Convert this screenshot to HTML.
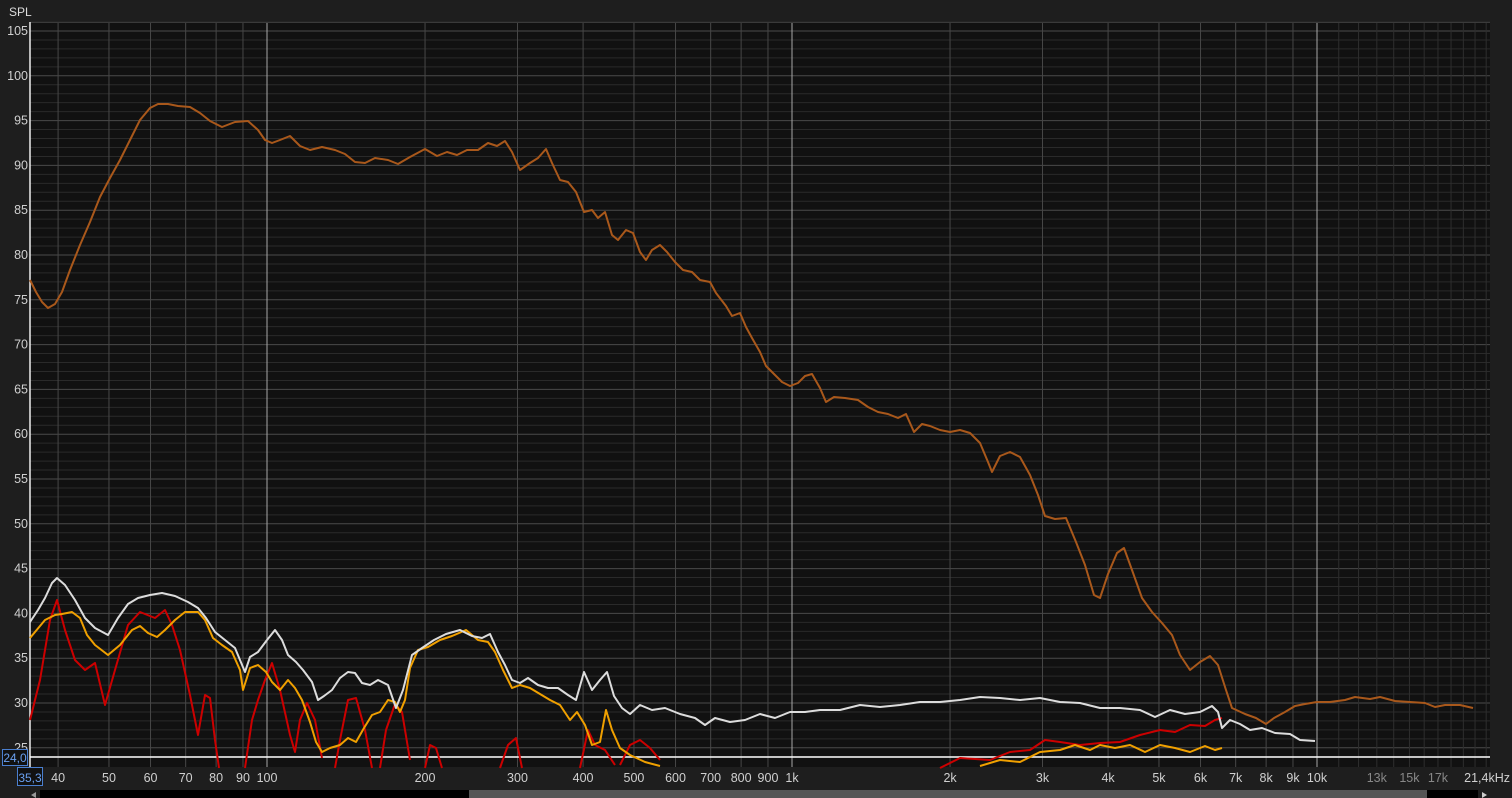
<!DOCTYPE html>
<html><head><meta charset="utf-8"><style>
html,body{margin:0;padding:0;background:#1e1e1e;width:1512px;height:798px;overflow:hidden;font-family:"Liberation Sans",sans-serif}
svg{position:absolute;left:0;top:0}
</style></head><body>
<svg id="s" width="1512" height="798" xmlns="http://www.w3.org/2000/svg">
<rect x="0" y="0" width="1512" height="798" fill="#1e1e1e"/>
<text x="9" y="16" fill="#ddd" font-size="12">SPL</text>
<rect x="30" y="22" width="1460" height="745" fill="#111"/>
<g id="grid"></g>
<line x1="30" y1="22.5" x2="1490" y2="22.5" stroke="#3a3a3a" stroke-width="1"/>
<line x1="30" y1="22" x2="30" y2="767" stroke="#eee" stroke-width="1.5"/>
<line x1="30" y1="757" x2="1490" y2="757" stroke="#fff" stroke-width="1.5"/>
<g fill="none" stroke-width="2" stroke-linejoin="round">
<polyline stroke="#cc0000" points="30,720 40,680 50,620 57,600 65,630 75,660 85,670 95,663 105,705 115,670 128,625 140,612 155,618 165,610 172,625 180,650 190,695 198,735 205,695 210,698 215,740 219,768"/>
<polyline stroke="#cc0000" points="245,768 252,720 258,700 265,680 272,663 280,690 290,735 295,752 300,720 307,703 315,720 322,758"/>
<polyline stroke="#cc0000" points="335,768 340,740 348,700 356,698 365,730 372,768"/>
<polyline stroke="#cc0000" points="380,768 386,730 395,704 402,712 410,760"/>
<polyline stroke="#cc0000" points="425,768 430,745 436,748 442,768"/>
<polyline stroke="#cc0000" points="500,768 508,745 516,738 522,768"/>
<polyline stroke="#cc0000" points="580,768 588,730 595,745 605,750 615,765"/>
<polyline stroke="#cc0000" points="620,765 630,745 640,740 650,748 660,760"/>
<polyline stroke="#cc0000" points="940,768 960,758 990,760 1010,752 1030,750 1045,740 1060,742 1080,745 1100,743 1120,742 1140,735 1160,730 1175,732 1190,725 1205,726 1215,720 1222,718"/>
<polyline stroke="#f0a000" points="30,638 45,620 55,615 62,614 72,612 80,618 87,635 95,645 108,655 120,645 132,630 140,626 148,633 157,637 165,630 175,620 185,612 198,612 205,620 213,638 222,645 232,652 240,670 243,690 250,668 258,665 266,672 272,682 280,690 288,680 295,688 302,700 310,722 316,742 322,752 330,748 340,745 348,738 356,742 364,728 372,715 380,712 388,700 395,702 400,712 405,700 410,668 418,650 428,647 440,640 452,636 466,630 478,640 488,642 495,652 503,670 512,688 520,685 530,688 540,694 550,700 560,705 570,720 577,712 585,725 592,745 600,742 606,710 612,730 620,748 630,755 645,762 660,766"/>
<polyline stroke="#f0a000" points="980,766 1000,760 1020,762 1040,752 1060,750 1075,745 1090,750 1100,745 1115,748 1130,745 1145,752 1160,745 1175,748 1190,752 1205,746 1215,750 1222,748"/>
<polyline stroke="#dcdcdc" points="30,622 38,610 45,598 52,583 57,578 65,585 75,600 85,618 95,628 108,635 118,618 128,604 138,598 150,595 162,593 175,596 188,602 198,608 206,618 215,632 225,640 235,648 240,660 245,672 250,657 258,652 267,640 275,630 282,640 288,655 296,662 303,670 312,682 318,700 324,696 332,690 340,678 348,672 355,673 362,683 370,685 378,680 388,685 396,708 403,690 412,655 422,648 434,640 446,634 460,630 472,636 482,638 490,634 498,652 505,665 512,680 520,683 528,678 538,685 548,688 558,688 568,695 576,700 584,672 592,690 600,680 607,672 614,696 622,708 630,714 640,705 652,710 665,708 680,714 695,718 705,725 715,718 730,722 745,720 760,714 775,718 790,712 805,712 820,710 840,710 860,705 880,707 900,705 920,702 940,702 960,700 980,697 1000,698 1020,700 1040,698 1060,702 1080,703 1100,708 1120,708 1140,710 1155,717 1170,710 1185,714 1200,712 1212,706 1218,712 1222,728 1230,720 1240,724 1250,730 1262,728 1275,733 1290,734 1300,740 1315,741"/>
<polyline stroke="#a9581b" points="30,280 36,292 42,302 48,308 55,304 62,292 70,270 80,245 90,222 100,197 110,178 120,160 130,140 140,120 150,108 158,104 168,104 178,106 190,107 200,113 210,121 222,127 235,122 248,121 258,130 265,140 272,143 280,140 290,136 300,146 310,150 322,147 335,150 345,154 355,162 365,163 375,158 388,160 398,164 410,157 425,149 437,156 447,152 457,155 467,150 478,150 488,143 497,146 505,141 512,152 520,170 530,163 538,158 546,149 552,163 560,180 568,182 576,192 584,212 592,210 598,218 605,212 612,235 618,240 626,230 633,233 640,252 646,260 652,250 660,245 667,252 675,262 683,270 692,272 700,280 710,282 716,293 726,306 732,316 740,313 746,327 752,338 760,352 766,366 774,374 782,382 790,386 798,383 805,376 812,374 820,388 826,402 834,397 845,398 858,400 868,407 878,412 888,414 898,418 906,414 914,432 922,424 930,426 940,430 950,432 960,430 970,433 980,443 988,462 992,472 1000,456 1010,452 1020,457 1030,475 1038,495 1045,516 1055,519 1066,518 1076,542 1085,565 1094,595 1100,598 1108,574 1117,553 1124,548 1132,570 1142,598 1152,612 1162,623 1172,635 1180,655 1190,670 1200,662 1210,656 1218,665 1226,690 1232,708 1245,714 1256,718 1266,724 1274,718 1285,712 1295,706 1305,704 1317,702 1330,702 1345,700 1355,697 1370,699 1380,697 1395,701 1410,702 1425,703 1435,707 1445,705 1460,705 1473,708"/>
</g>
<g id="lab" fill="#d0d0d0" font-size="12.5"></g>
<rect x="2.5" y="749.5" width="25" height="16" fill="#111" stroke="#4a7fd0"/>
<text x="15" y="762" fill="#6aa0f0" font-size="12" text-anchor="middle">24,0</text>
<rect x="17.5" y="767.5" width="25" height="18" fill="#111" stroke="#4a7fd0"/>
<text x="30" y="782" fill="#6aa0f0" font-size="12" text-anchor="middle">35,3</text>
<rect x="40" y="790" width="1438" height="8" fill="#000"/>
<rect x="469" y="790" width="958" height="8" fill="#555"/>
<polygon points="36,792 31,795 36,798" fill="#999"/>
<polygon points="1482,792 1487,795 1482,798" fill="#ccc"/>
</svg>
<script>
var ns="http://www.w3.org/2000/svg",g=document.getElementById("grid"),lab=document.getElementById("lab");
function el(p,t,a){var e=document.createElementNS(ns,t);for(var k in a)e.setAttribute(k,a[k]);p.appendChild(e);return e;}
function Y(d){return 31+(105-d)*8.96;}
function X(f){return 267+525*Math.log10(f/100);}
for(var d=24;d<=106;d++){var y=Y(d);if(y<22||y>767)continue;el(g,"line",{x1:30,x2:1490,y1:y,y2:y,stroke:d%5==0?"#4a4a4a":"#2a2a2a","stroke-width":1});
 if(d%5==0&&d<=105){var t=el(lab,"text",{x:28,y:y+4,"text-anchor":"end"});t.textContent=d;}}
var fs=[40,50,60,70,80,90,100,200,300,400,500,600,700,800,900,1000,2000,3000,4000,5000,6000,7000,8000,9000,10000];
var extra=[11000,12000,13000,14000,15000,16000,17000,18000,19000,20000,21000];
fs.forEach(function(f){var x=X(f);var maj=(f==100||f==1000||f==10000);el(g,"line",{x1:x,x2:x,y1:22,y2:767,stroke:maj?"#a8a8a8":"#474747","stroke-width":1});
 var t=el(lab,"text",{x:x,y:782,"text-anchor":"middle"});t.textContent=f>=1000?(f/1000)+"k":f;});
extra.forEach(function(f){el(g,"line",{x1:X(f),x2:X(f),y1:22,y2:767,stroke:"#2e2e2e","stroke-width":1});});
[13000,15000,17000].forEach(function(f){var t=el(lab,"text",{x:X(f),y:782,"text-anchor":"middle",fill:"#888"});t.textContent=(f/1000)+"k";});
var t=el(lab,"text",{x:1510,y:782,"text-anchor":"end"});t.textContent="21,4kHz";
</script>
</body></html>
